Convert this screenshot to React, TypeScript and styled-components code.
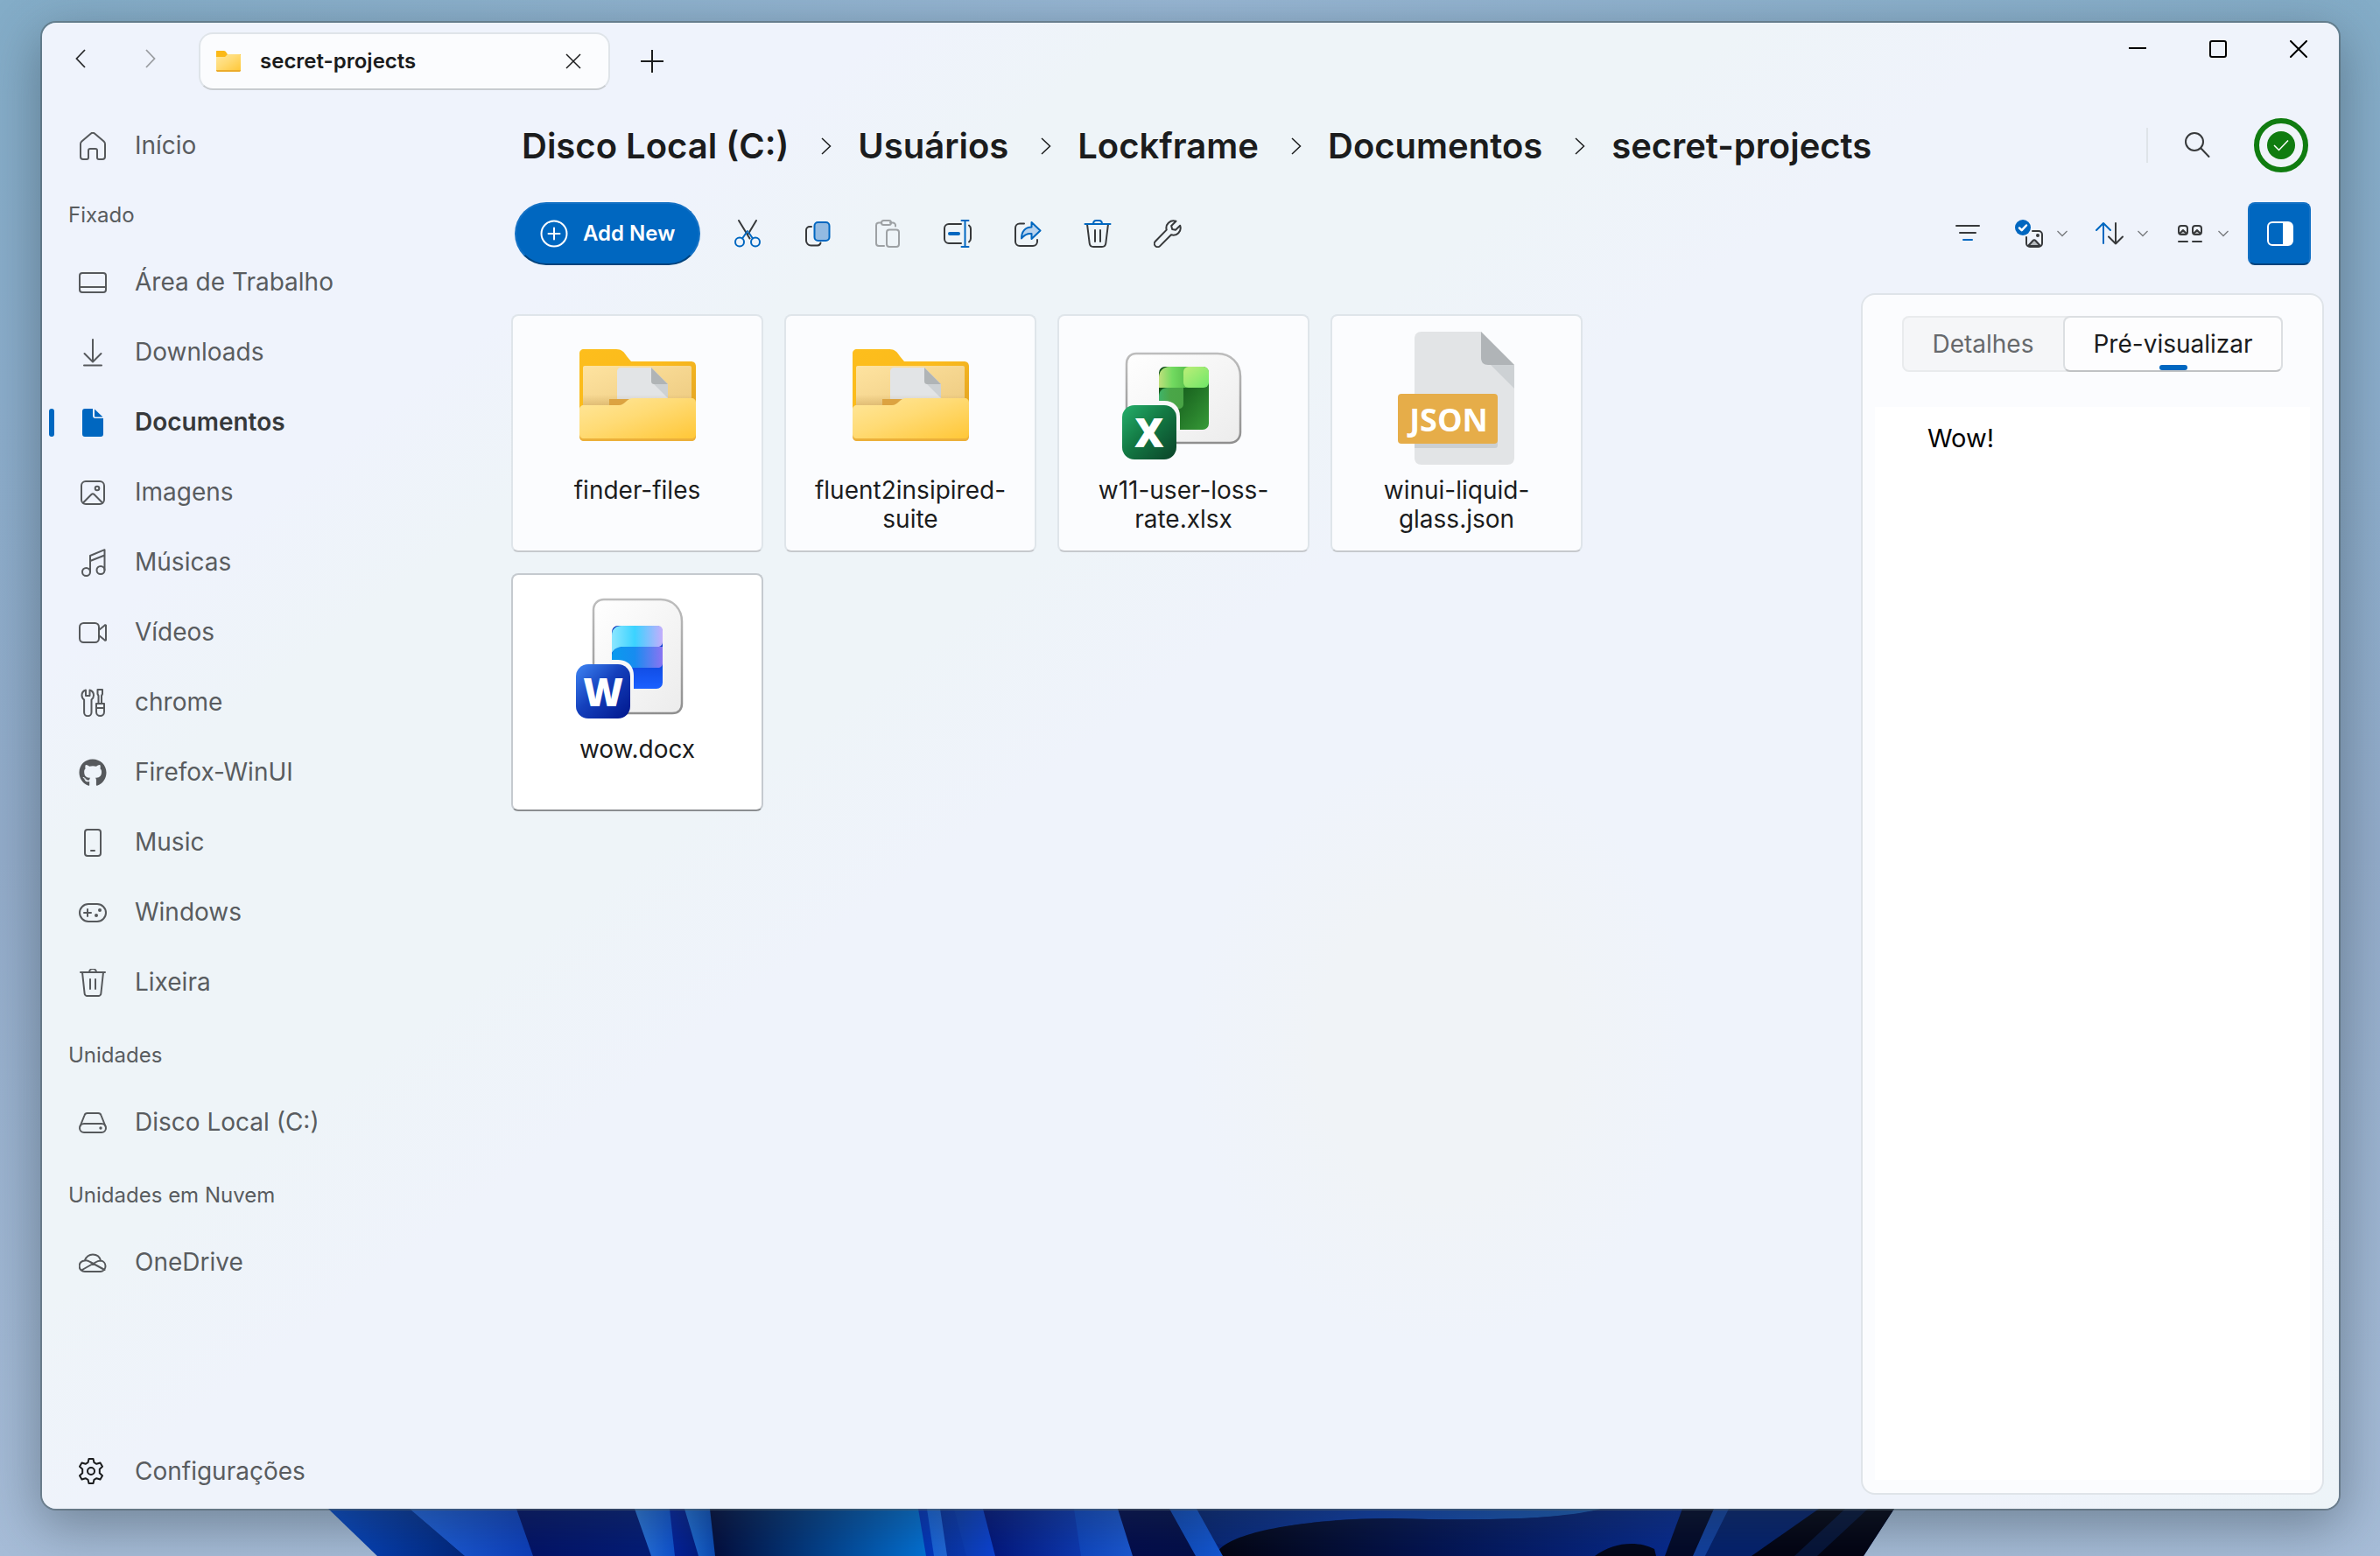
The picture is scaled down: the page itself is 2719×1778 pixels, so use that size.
import React, { useState } from "react";
import styled, { createGlobalStyle, css } from "styled-components";
import { FaGithub } from "react-icons/fa";

const font = `Inter, "Noto Sans", "Liberation Sans", sans-serif`;
const accent = "#0067c0";

const GlobalStyle = createGlobalStyle`
  *, *::before, *::after { box-sizing: border-box; }
  body { margin: 0; font-family: ${font}; color: #1b1c1d; }
  button { font: inherit; color: inherit; background: none; border: 0; padding: 0; cursor: pointer; }
  a { color: inherit; text-decoration: none; }
  svg { display: block; flex: none; }
`;

/* ---------- shell ---------- */

const Desktop = styled.div`
  position: relative;
  display: flex;
  min-height: 100vh;
  padding: 26px 47px 54px 48px;
  overflow: hidden;
  background:
    radial-gradient(ellipse 50% 12% at 50% 0, rgba(158, 186, 216, 0.8), transparent),
    linear-gradient(180deg, #84adc8 0%, #8badcb 25%, #93acca 55%, #a7bdd8 100%);
`;

const Bloom = styled.svg`
  position: absolute;
  left: 0;
  bottom: 0;
  width: 100%;
  height: 54px;
`;

const Window = styled.div`
  position: relative;
  flex: 1;
  min-width: 0;
  display: flex;
  flex-direction: column;
  border-radius: 16px;
  background:
    radial-gradient(ellipse 11% 20% at 61% 69%, #f0f3f7 50%, rgba(240, 243, 247, 0) 100%),
    radial-gradient(circle at 100% 100%, #edf4f8 0, rgba(237, 244, 248, 0) 14%),
    linear-gradient(143deg, #eff3fc 0%, #eff3fc 20%, #eef4f8 26%, #eef4f8 40%, #eff3fb 47%, #eff3fb 100%);
  box-shadow:
    0 0 0 2px rgba(80, 96, 104, 0.55),
    0 16px 60px 4px rgba(40, 55, 65, 0.42);
`;

const TitleBar = styled.header`
  display: flex;
  align-items: flex-start;
  height: 99px;
  padding-left: 4px;
`;

const HistoryNav = styled.div`
  display: flex;
  padding-top: 11px;
  margin-right: 15px;
`;

const HistoryButton = styled.button<{ $dim?: boolean }>`
  display: grid;
  place-items: center;
  width: 80px;
  height: 60px;
  color: ${(p) => (p.$dim ? "#9a9da1" : "#2b2c2e")};
`;

const Tab = styled.div`
  display: flex;
  align-items: center;
  width: 470px;
  height: 66px;
  margin-top: 11px;
  padding: 0 16px 0 18px;
  border: 2px solid #dfe4e9;
  border-bottom-color: #c8ccd0;
  border-radius: 16px;
  background: #fbfcfe;
`;

const TabTitle = styled.span`
  flex: 1;
  margin-left: 22px;
  font-size: 24px;
  line-height: 32px;
  font-weight: 600;
`;

const SmallButton = styled.button`
  display: grid;
  place-items: center;
  width: 48px;
  height: 48px;
`;

const NewTab = styled(SmallButton)`
  width: 56px;
  height: 66px;
  margin: 11px 0 0 20px;
`;

const WindowControls = styled.div`
  display: flex;
  margin-left: auto;
  color: #000;
`;

const ControlButton = styled.button`
  display: grid;
  place-items: center;
  width: 92px;
  height: 60px;
`;

const Body = styled.div`
  flex: 1;
  min-height: 0;
  display: flex;
`;

/* ---------- sidebar ---------- */

const Sidebar = styled.nav`
  display: flex;
  flex-direction: column;
  flex: 0 0 536px;
  padding-bottom: 4px;
  color: #595c5f;
`;

const NavList = styled.ul`
  margin: 0;
  padding: 0;
  list-style: none;
`;

const NavHeading = styled.h2<{ $spaced?: boolean }>`
  display: flex;
  align-items: center;
  height: 76px;
  margin: ${(p) => (p.$spaced ? "4px" : "0")} 0 0;
  padding: 6px 0 0 30px;
  font-size: 24px;
  line-height: 32px;
  font-weight: 400;
`;

const NavLink = styled.a<{ $active?: boolean }>`
  display: flex;
  align-items: center;
  height: 80px;
  padding: 2px 0 0 8px;
  font-size: 28px;
  line-height: 36px;
  ${(p) =>
    p.$active &&
    css`
      color: #37393b;
      font-weight: 600;
    `}
  &::before {
    content: "";
    width: 6px;
    height: 32px;
    margin: 2px 28px 0 0;
    border-radius: 3px;
    background: ${(p) => (p.$active ? accent : "transparent")};
  }
`;

const NavIcon = styled.span<{ $active?: boolean }>`
  width: 32px;
  height: 32px;
  margin: 2px 32px 0 0;
  color: ${(p) => (p.$active ? accent : "#56595c")};
`;

const Footer = styled.div`
  margin-top: auto;
  ${NavIcon} {
    margin-top: 0;
    color: #1b1c1d;
  }
`;

/* ---------- main ---------- */

const Main = styled.main`
  flex: 1;
  min-width: 0;
  display: flex;
  flex-direction: column;
  padding: 0 17px 16px 0;
`;

const Heading = styled.div`
  display: flex;
  align-items: center;
  height: 82px;
  padding: 0 18px 0 12px;
`;

const Crumbs = styled.ol`
  display: flex;
  align-items: center;
  margin: 0;
  padding: 2px 0 0;
  list-style: none;
  font-size: 40px;
  line-height: 48px;
  font-weight: 600;
`;

const Crumb = styled.li`
  display: flex;
  align-items: center;
  svg {
    margin: 0 30px 0 37px;
  }
`;

const HeadingActions = styled.div`
  display: flex;
  align-items: center;
  margin-left: auto;
`;

const Divider = styled.span`
  width: 2px;
  height: 40px;
  background: #dfe4e9;
`;

const SearchButton = styled.button`
  display: grid;
  place-items: center;
  width: 72px;
  height: 72px;
  margin: 0 29px 0 20px;
  color: #37393b;
`;

const StatusBadge = styled.button`
  display: grid;
  place-items: center;
  width: 62px;
  height: 62px;
  border: 6px solid #107c10;
  border-radius: 50%;
  background: #eff4f9;
`;

const Toolbar = styled.div`
  display: flex;
  align-items: center;
  gap: 8px;
  margin-top: 24px;
  padding: 0 15px 0 4px;
`;

const AddButton = styled.button`
  display: flex;
  align-items: center;
  gap: 17px;
  height: 72px;
  margin-right: 10px;
  padding: 0 27px;
  border: 2px solid #1471c4;
  border-bottom-color: #00437d;
  border-radius: 36px;
  background: ${accent};
  color: #fff;
  font-size: 24px;
  line-height: 32px;
  font-weight: 600;
`;

const ToolButton = styled.button<{ $push?: boolean }>`
  display: grid;
  place-items: center;
  width: 72px;
  height: 72px;
  margin-left: ${(p) => (p.$push ? "auto" : "0")};
  color: #37393b;
  &:disabled {
    color: #9da1a4;
  }
`;

const MenuButton = styled.button`
  display: flex;
  align-items: center;
  gap: 16px;
  width: 84px;
  height: 72px;
  padding-left: 10px;
  color: #37393b;
`;

const PanelButton = styled(ToolButton)`
  border: 2px solid #1471c4;
  border-bottom-color: #00437d;
  border-radius: 8px;
  background: ${accent};
  color: #fff;
`;

const Content = styled.div`
  flex: 1;
  display: flex;
  min-height: 0;
  margin-top: 32px;
`;

const Files = styled.div`
  flex: 1;
  display: grid;
  grid-template-columns: repeat(auto-fill, 288px);
  grid-auto-rows: 272px;
  gap: 24px;
  padding: 24px 32px 0 0;
`;

const Card = styled.button<{ $selected?: boolean }>`
  display: flex;
  flex-direction: column;
  align-items: center;
  padding: 18px 24px 0;
  border: 2px solid ${(p) => (p.$selected ? "#c5cacf" : "#dfe5ea")};
  border-bottom-color: ${(p) => (p.$selected ? "#8b8e91" : "#c6c9cd")};
  border-radius: 8px;
  background: ${(p) => (p.$selected ? "#fff" : "#fbfcfe")};
  font-size: 28px;
  line-height: 33px;
  text-align: center;
`;

const CardName = styled.span`
  margin-top: 13px;
`;

const Preview = styled.aside`
  display: flex;
  flex-direction: column;
  align-items: center;
  flex: 0 0 529px;
  padding: 24px 14px 15px;
  border: 2px solid #dfe4e9;
  border-radius: 16px;
  background: #fbfcfe;
`;

const Segments = styled.div`
  display: flex;
  height: 64px;
  border-radius: 8px;
  background: #f5f6f8;
  box-shadow: inset 0 0 0 2px #e9ebed;
`;

const Segment = styled.button<{ $active: boolean }>`
  position: relative;
  padding: 0 32px;
  border: 2px solid transparent;
  border-radius: 8px;
  font-size: 28px;
  line-height: 36px;
  color: #66696c;
  ${(p) =>
    p.$active &&
    css`
      color: #1b1c1d;
      background: #fdfdfe;
      border-color: #dcdfe2;
      border-bottom-color: #c0c2c4;
      &::after {
        content: "";
        position: absolute;
        left: calc(50% - 16px);
        bottom: 0;
        width: 32px;
        height: 6px;
        border-radius: 3px;
        background: ${accent};
      }
    `}
`;

const Sheet = styled.article`
  flex: 1;
  align-self: stretch;
  margin-top: 40px;
  padding: 18px 60px;
  background: #fff;
  color: #000;
  font-size: 29px;
  line-height: 36px;
`;

/* ---------- icons ---------- */

type IconProps = { size?: number; w?: number; children: React.ReactNode };
const Icon = ({ size = 32, w = 2, children }: IconProps) => (
  <svg
    width={size}
    height={size}
    viewBox="0 0 32 32"
    fill="none"
    stroke="currentColor"
    strokeWidth={w}
    strokeLinecap="round"
    strokeLinejoin="round"
    aria-hidden="true"
  >
    {children}
  </svg>
);

const Chevron = ({ dir }: { dir: "left" | "right" }) => (
  <svg width="12" height="22" viewBox="0 0 12 22" fill="none" stroke="currentColor" strokeWidth="1.800" aria-hidden="true">
    <path d={dir === "left" ? "M11 1 1.500 11 11 21" : "M1 1 10.500 11 1 21"} />
  </svg>
);

const CrumbChevron = () => (
  <svg width="12" height="20" viewBox="0 0 12 20" fill="none" stroke="#1b1c1d" strokeWidth="1.500" aria-hidden="true">
    <path d="M1 1 10.500 10 1 19" />
  </svg>
);

const Caret = () => (
  <svg width="12" height="8" viewBox="0 0 12 8" fill="none" stroke="#77797c" strokeWidth="1.300" aria-hidden="true">
    <path d="M.5 1 6 6.500 11.500 1" />
  </svg>
);

const icons = {
  home: (
    <Icon>
      <path d="M2 13.600a4 4 0 0 1 1.400-3L14 1.600a3 3 0 0 1 4 0l10.600 9a4 4 0 0 1 1.400 3V28a3 3 0 0 1-3 3h-4a2 2 0 0 1-2-2v-8a2 2 0 0 0-2-2h-6a2 2 0 0 0-2 2v8a2 2 0 0 1-2 2H5a3 3 0 0 1-3-3Z" />
    </Icon>
  ),
  desktop: (
    <Icon>
      <rect x="1" y="5" width="30" height="22" rx="3" />
      <path d="M1 21h30" />
    </Icon>
  ),
  download: (
    <Icon>
      <path d="M16 1v25M6.500 17l9.500 9.500L25.500 17M6 30.500h20" />
    </Icon>
  ),
  document: (
    <Icon>
      <path
        fill="currentColor"
        stroke="none"
        d="M16 0v8a3 3 0 0 0 3 3h9v18a3 3 0 0 1-3 3H7a3 3 0 0 1-3-3V3a3 3 0 0 1 3-3ZM18 .5 27.500 9.500H19a1 1 0 0 1-1-1Z"
      />
    </Icon>
  ),
  image: (
    <Icon>
      <rect x="3" y="3" width="26" height="26" rx="5" />
      <circle cx="21" cy="11" r="2.300" />
      <path d="m5 27.500 9.400-9.500a2.300 2.300 0 0 1 3.200 0l9.400 9.500" />
    </Icon>
  ),
  notes: (
    <Icon>
      <circle cx="8.500" cy="26.500" r="4.500" />
      <circle cx="25" cy="24.500" r="4.500" />
      <path d="M13 26.500V8L29.500 1.200v23M13 14l16.500-6.500" />
    </Icon>
  ),
  video: (
    <Icon>
      <rect x="1" y="5" width="22" height="22" rx="4.500" />
      <path d="m23 13 6.400-5.200a.8.800 0 0 1 1.600.6v15.200a.8.800 0 0 1-1.600.6L23 19" />
    </Icon>
  ),
  tools: (
    <Icon>
      <path d="M8 1.500V8h4.500V1.500c3 1 4.500 3.500 4.500 6 0 2.500-1.200 4-2.500 5V27a4.200 4.200 0 0 1-8.400 0V12.500C4.700 11.500 3.500 10 3.500 7.500c0-2.500 1.500-5 4.500-6ZM21.500 1h5.500v5l-1 2v8.500M22.500 16.500V8l-1-2V1M20 17h9v9.500a4.500 4.500 0 0 1-9 0ZM20 22h9" />
    </Icon>
  ),
  github: <FaGithub size={32} />,
  phone: (
    <Icon>
      <rect x="7" y="1" width="18" height="30" rx="3" />
      <path d="M14 25h4" />
    </Icon>
  ),
  gamepad: (
    <Icon>
      <rect x="1" y="6" width="30" height="20" rx="10" />
      <path d="M10 12v8M6 16h8" />
      <circle cx="24" cy="13" r="2" fill="currentColor" stroke="none" />
      <circle cx="20" cy="19" r="2" fill="currentColor" stroke="none" />
    </Icon>
  ),
  bin: (
    <Icon>
      <path d="M2 4h28M12 4a4 4 0 0 1 8 0M4 4l2.600 24a3 3 0 0 0 3 3h12.800a3 3 0 0 0 3-3L28 4M13 12v11M19 12v11" />
    </Icon>
  ),
  disk: (
    <Icon>
      <path d="M1.500 20 6.500 7.500A3.500 3.500 0 0 1 10 5h12a3.500 3.500 0 0 1 3.500 2.500l5 12.500" />
      <rect x="1" y="17" width="30" height="10" rx="5" />
      <circle cx="25" cy="22" r="1.700" fill="currentColor" stroke="none" />
    </Icon>
  ),
  cloud: (
    <Icon>
      <path d="M7 26a6.300 6.300 0 0 1-.2-12.600C8.500 9 12 6.500 16 6.500c4.600 0 8 2.700 9 7A6.300 6.300 0 0 1 25 26ZM7 13.400c2.500-.4 4.500.6 6 1.600l16.500 9M3 24.500 18 16c2.500-1.500 4.500-2.400 7-2.400" />
    </Icon>
  ),
  gear: (
    <svg width="28" height="32" viewBox="0 0 28 32" fill="none" stroke="currentColor" strokeWidth="2" strokeLinejoin="round" aria-hidden="true">
      <circle cx="14" cy="16" r="4" />
      <path d="M11.500 2h5l1 4.200 2.800 1.600 4.200-1.300 2.500 4.300-3.200 3v4.400l3.200 3-2.500 4.300-4.200-1.300-2.800 1.600-1 4.200h-5l-1-4.200-2.800-1.600-4.200 1.300L1 21.200l3.200-3v-4.400L1 10.800l2.500-4.300 4.200 1.300 2.800-1.600Z" />
    </svg>
  ),
};

const tools = {
  cut: (
    <Icon>
      <path d="m6 1 12.500 20.500M26 1l-9 15" />
      <g stroke={accent}>
        <circle cx="7" cy="25.500" r="5" />
        <circle cx="25" cy="25.500" r="5" />
        <path d="m10 21.500 6-8.500M22 21.500 17.500 15" />
      </g>
    </Icon>
  ),
  copy: (
    <Icon>
      <path d="M9 8H7a4 4 0 0 0-4 4v12a5.500 5.500 0 0 0 5.500 5.500H16a4 4 0 0 0 3.500-3" />
      <rect x="12.500" y="3" width="17" height="21" rx="4" fill="#93bbe2" stroke={accent} />
    </Icon>
  ),
  paste: (
    <Icon>
      <path d="M9 3.500H6a3 3 0 0 0-3 3V27a3 3 0 0 0 3 3h6M19 3.500h3a3 3 0 0 1 3 3v1" />
      <rect x="9" y="1" width="11" height="5" rx="2.500" />
      <rect x="15" y="11.500" width="14" height="19.500" rx="3" />
    </Icon>
  ),
  rename: (
    <Icon>
      <path d="M20 5H6a5 5 0 0 0-5 5v12a5 5 0 0 0 5 5h14M29 6.500A5 5 0 0 1 31 10.500v11a5 5 0 0 1-2 4" />
      <path stroke={accent} d="M24.500 1.500v29M20.500 1h8M20.500 31h8" />
      <path stroke={accent} strokeWidth="4" d="M7 16h10" />
    </Icon>
  ),
  share: (
    <Icon>
      <path d="M12 4.500H7a5 5 0 0 0-5 5V25a5 5 0 0 0 5 5h15a5 5 0 0 0 5-5v-2" />
      <path fill="#b9d3ee" stroke={accent} d="M20.500 3 30.500 12.500l-10 9.500v-6c-5-.5-8.500 1.500-11.500 5.500 0-7.500 4-13 11.500-13Z" />
    </Icon>
  ),
  trash: (
    <Icon>
      <path d="m4 5 2.700 22a4.500 4.500 0 0 0 4.500 4h9.600a4.500 4.500 0 0 0 4.500-4L28 5M13 12v13M19 12v13" />
      <path stroke={accent} d="M1.500 5h29M11 5c0-2.500 1.500-4 3.500-4h3c2 0 3.500 1.500 3.500 4" />
    </Icon>
  ),
  wrench: (
    <Icon>
      <path d="M25.500 1.800a8.200 8.200 0 0 0-10.800 9.800L1.900 24.800a3.700 3.700 0 0 0 5.300 5.300L20 17.300A8.200 8.200 0 0 0 30.200 6.800l-5.200 5-3.800-.8-1-4Z" />
    </Icon>
  ),
  filter: (
    <Icon>
      <path d="M3 7h26M7 15h18" />
      <path stroke={accent} d="M11 23h10" />
    </Icon>
  ),
  select: (
    <Icon>
      <path d="M20 13h7a4 4 0 0 1 4 4v10a4 4 0 0 1-4 4H17a4 4 0 0 1-4-4v-7" />
      <path fill="#b5b9bc" d="m15 30 5.500-6a2 2 0 0 1 3 0l5.500 6Z" />
      <circle cx="26" cy="18" r="2" fill="currentColor" stroke="none" />
      <circle cx="9" cy="9" r="9" fill={accent} stroke="none" />
      <path stroke="#fff" strokeWidth="2.500" d="m5 9.500 2.700 2.700L13 6.500" />
    </Icon>
  ),
  sort: (
    <Icon>
      <path stroke={accent} d="M9 27V4.500M1 12l8-8 8 8" />
      <path d="M23 4v23.500M15 19.500l8 8 8-8" />
    </Icon>
  ),
  view: (
    <Icon>
      {[3, 19].map((x) => (
        <g key={x}>
          <rect x={x} y="7" width="10" height="10" rx="3" />
          <path fill="#b5b9bc" d={`m${x + 1} 16 4-4 4 4`} />
          <path d={`M${x} 25h10`} />
        </g>
      ))}
    </Icon>
  ),
  panel: (
    <Icon>
      <rect x="3" y="3" width="28" height="26" rx="5" />
      <path fill="currentColor" stroke="none" d="M20 3h6a5 5 0 0 1 5 5v16a5 5 0 0 1-5 5h-6Z" />
    </Icon>
  ),
};

/* ---------- file artwork ---------- */

const Art = ({ children }: { children: React.ReactNode }) => (
  <svg width="160" height="152" viewBox="0 0 160 152" aria-hidden="true">
    {children}
  </svg>
);

const FolderArt = () => (
  <Art>
    <path fill="url(#folderBack)" d="M19 20h37c6 0 9 3 12 8l5 6h68c4 0 6 2 6 6v56H14V25c0-3 2-5 5-5Z" />
    <rect x="18" y="39" width="124" height="50" rx="2" fill="url(#folderInner)" />
    <path fill="#e2e4e6" d="M61 41h35l19 19v20H57V45c0-2 2-4 4-4Z" />
    <path fill="#cdd1d4" d="m99 60 16 16V60Z" />
    <path fill="#b0b4b6" d="M96 41v15c0 3 1 4 4 4h15Z" />
    <path fill="url(#folderShade)" d="M18 72h124v14H18Z" />
    <path fill="#dca341" d="M48 77h25v10H48Z" />
    <path fill="#ecb03a" d="M14 90h133v30c0 3-2 5-5 5H19c-3 0-5-2-5-5Z" />
    <path fill="url(#folderFront)" d="M19 84h40c7 0 9-8 16-8h67c3 0 5 2 5 5v36c0 3-2 5-5 5H19c-3 0-5-2-5-5V89c0-3 2-5 5-5Z" />
  </Art>
);

const ExcelArt = () => (
  <Art>
    <path fill="url(#page)" stroke="url(#pageEdge)" strokeWidth="2.500" d="M26 25h93c15 0 26 11 26 26v64c0 7-5 12-12 12H27c-7 0-12-5-12-12V37c0-7 4-12 11-12Z" />
    <rect x="52" y="40" width="57" height="72" rx="7" fill="url(#xlDark)" />
    <path fill="url(#xlLeft)" d="M64 40h22v24H52V52c0-7 5-12 12-12Z" />
    <rect x="80" y="40" width="29" height="24" rx="6" fill="url(#xlRight)" />
    <path fill="url(#xlMid)" d="M62 64h18v18c0 4-2 6-6 6H52V74c0-6 4-10 10-10Z" />
    <path fill="#f8f8f8" d="M48 79h10c11 0 18 7 18 18v16H48Z" />
    <rect x="10" y="84" width="62" height="62" rx="14" fill="url(#xlBadge)" />
    <text x="41" y="132" textAnchor="middle" fill="#fff" fontFamily='"Open Sans", sans-serif' fontWeight="800" fontSize="46">X</text>
  </Art>
);

const JsonArt = () => (
  <Art>
    <path fill="#e2e4e6" d="M40 0h68l38 38v106c0 5-3 8-8 8H40c-5 0-8-3-8-8V8c0-5 3-8 8-8Z" />
    <path fill="#cdd1d4" d="m119 38 27 27V38Z" />
    <path fill="#b0b4b7" d="M108 0v30c0 5 3 8 8 8h30Z" />
    <path fill="#cbcfd2" d="M32 124h95v6c0 2-1 3-3 3H32Z" />
    <rect x="13" y="71" width="114" height="57" rx="4" fill="#e6ad49" />
    <text x="71" y="114" textAnchor="middle" fill="#fff" fontFamily='"Open Sans", sans-serif' fontWeight="700" fontSize="36">JSON</text>
  </Art>
);

const WordArt = () => (
  <Art>
    <path fill="url(#page)" stroke="url(#pageEdge)" strokeWidth="2.500" d="M42 10h65c14 0 24 11 24 25v94c0 7-4 11-11 11H41c-6 0-11-4-11-11V22c0-7 5-12 12-12Z" />
    <rect x="51" y="40" width="58" height="72" rx="7" fill="url(#wdLow)" />
    <path fill="url(#wdMid)" d="M63 64h46v18c0 4-2 6-6 6H51V74c0-6 6-10 12-10Z" />
    <path fill="url(#wdTop)" d="M62 40h41c4 0 6 2 6 6v12c0 4-2 6-6 6H64c-6 0-10 2-13 7V51c0-7 4-11 11-11Z" />
    <path fill="#f7f7f8" d="M48 79h10c11 0 18 7 18 18v16H48Z" />
    <rect x="10" y="84" width="62" height="62" rx="14" fill="url(#wdBadge)" />
    <text x="41" y="132" textAnchor="middle" fill="#fff" fontFamily='"Open Sans", sans-serif' fontWeight="800" fontSize="44">W</text>
  </Art>
);

type GradProps = { id: string; from: string; to: string; mid?: string; dir?: "x" | "y" | "d" };
const Grad = ({ id, from, to, mid, dir = "d" }: GradProps) => (
  <linearGradient id={id} x1="0" y1="0" x2={dir === "y" ? 0 : 1} y2={dir === "x" ? 0 : 1}>
    <stop offset="0" stopColor={from} />
    {mid && <stop offset=".45" stopColor={mid} />}
    <stop offset="1" stopColor={to} />
  </linearGradient>
);

/* Each petal is a strip: top-left x, top-right x, bottom-left x, bottom-right x, colours. */
const petals: [number, number, number, number, string, string][] = [
  [375, 468, 431, 531, "#0547c4", "#00257c"],
  [468, 590, 531, 609, "#1e62dc", "#0b3dbc"],
  [590, 725, 609, 744, "#001066", "#001a78"],
  [725, 765, 744, 771, "#2b78dc", "#0b4fd0"],
  [765, 782, 771, 798, "#0020a0", "#001a80"],
  [782, 811, 798, 817, "#2070d8", "#0848b4"],
  [811, 1049, 817, 1058, "#000a3a", "#0072d8"],
  [1049, 1059, 1058, 1067, "#0030b8", "#0038c0"],
  [1059, 1074, 1067, 1082, "#1462dc", "#2068d8"],
  [1074, 1090, 1082, 1104, "#0530a0", "#0838b4"],
  [1090, 1123, 1104, 1137, "#0a3aac", "#0a42d8"],
  [1123, 1227, 1137, 1235, "#00127a", "#0b38b4"],
  [1227, 1277, 1235, 1294, "#0c44c0", "#1a58d4"],
  [1277, 1336, 1294, 1366, "#000a4c", "#000c48"],
  [1336, 1366, 1366, 1396, "#0d48b8", "#1258d8"],
];

const Wallpaper = () => (
  <Bloom viewBox="0 0 2719 54" preserveAspectRatio="none" aria-hidden="true">
    <defs>
      {petals.map((p, i) => (
        <Grad key={i} id={`petal${i}`} from={p[4]} to={p[5]} dir="x" />
      ))}
      <Grad id="wave" from="#000a40" mid="#03217c" to="#052a94" />
      <Grad id="crest" from="#04206c" mid="#0b3aa8" to="#1a5cb4" dir="x" />
      <Grad id="hollow" from="#000210" mid="#011150" to="#052a94" dir="x" />
    </defs>
    <path fill="url(#wave)" d="M1345 0H2164L2129 54H1380Z" />
    <path fill="url(#crest)" d="M1345 0H1830C1790 12 1700 14 1590 11 1500 11 1440 22 1398 42L1360 30Z" />
    <path fill="url(#hollow)" d="M1390 54c0-20 70-42 200-43 110 3 190 1 240-11h100l-20 54Z" />
    <path fill="#000417" d="M1822 54c20-16 50-18 68-8l2 8Z" />
    <path fill="#000727" d="M1922 0h38l-22 54h-36Z" />
    <path fill="#103f9e" d="M1958 0h18l-28 54h-14Z" />
    <path fill="#03206c" d="M1975 0h103l-76 54h-54Z" />
    <path fill="#000211" d="M2078 0h86l-35 54h-128Z" />
    <path fill="#041237" d="M2108 0h26l-58 54h-26Z" />
    {petals.map((p, i) => (
      <path key={i} fill={`url(#petal${i})`} d={`M${p[0]} 0H${p[1] + 1}L${p[3] + 1} 54H${p[2]}Z`} />
    ))}
  </Bloom>
);

const HiddenSvg = styled.svg`
  position: absolute;
`;

const ArtDefs = () => (
  <HiddenSvg width="0" height="0" aria-hidden="true">
    <defs>
      <Grad id="folderBack" from="#fdbe1c" mid="#fbbb1c" to="#e0a226" />
      <Grad id="folderInner" from="#fee3a0" to="#edca80" />
      <Grad id="folderShade" from="rgba(160,110,30,0)" to="rgba(160,110,30,.28)" dir="y" />
      <Grad id="folderFront" from="#ffe79c" mid="#ffdb75" to="#ffc737" />
      <Grad id="page" from="#ffffff" to="#ececec" />
      <Grad id="pageEdge" from="#bdbdbd" to="#8f8f8f" dir="y" />
      <Grad id="xlDark" from="#0a4a14" mid="#1a6620" to="#379a38" />
      <Grad id="xlLeft" from="#bfe07c" mid="#72da60" to="#56bc4a" dir="x" />
      <Grad id="xlRight" from="#bdee78" to="#6fe768" />
      <Grad id="xlMid" from="#3fb36a" mid="#4aa648" to="#49a445" dir="x" />
      <Grad id="xlBadge" from="#25b06b" mid="#137a44" to="#0b4228" />
      <Grad id="wdLow" from="#0028b4" to="#1a60ff" dir="y" />
      <Grad id="wdMid" from="#0a9bee" mid="#178cf0" to="#8a74f2" dir="x" />
      <Grad id="wdTop" from="#8ce6ff" mid="#3bd3ff" to="#c4adfc" dir="x" />
      <Grad id="wdBadge" from="#3f86f4" mid="#1440bc" to="#00168c" />
    </defs>
  </HiddenSvg>
);

const TabFolder = () => (
  <svg width="28" height="24" viewBox="0 0 28 24" aria-hidden="true">
    <path fill="#fbb917" d="M1 0h8c2 0 3 3 4 4h15v6H0V1c0-1 0-1 1-1Z" />
    <path fill="url(#folderFront)" d="M0 7h10l3-3h14l1 1v18H0Z" />
    <path fill="#ecac2b" d="M0 22h28v1l-1 1H1l-1-1Z" />
  </svg>
);

/* ---------- data ---------- */

type NavItem = { label: string; icon: keyof typeof icons };

const pinned: NavItem[] = [
  { label: "Área de Trabalho", icon: "desktop" },
  { label: "Downloads", icon: "download" },
  { label: "Documentos", icon: "document" },
  { label: "Imagens", icon: "image" },
  { label: "Músicas", icon: "notes" },
  { label: "Vídeos", icon: "video" },
  { label: "chrome", icon: "tools" },
  { label: "Firefox-WinUI", icon: "github" },
  { label: "Music", icon: "phone" },
  { label: "Windows", icon: "gamepad" },
  { label: "Lixeira", icon: "bin" },
];

const groups: { title?: string; items: NavItem[] }[] = [
  { items: [{ label: "Início", icon: "home" }] },
  { title: "Fixado", items: pinned },
  { title: "Unidades", items: [{ label: "Disco Local (C:)", icon: "disk" }] },
  { title: "Unidades em Nuvem", items: [{ label: "OneDrive", icon: "cloud" }] },
];

const crumbs = ["Disco Local (C:)", "Usuários", "Lockframe", "Documentos", "secret-projects"];

const commands: { label: string; icon: keyof typeof tools; disabled?: boolean }[] = [
  { label: "Recortar", icon: "cut" },
  { label: "Copiar", icon: "copy" },
  { label: "Colar", icon: "paste", disabled: true },
  { label: "Renomear", icon: "rename" },
  { label: "Compartilhar", icon: "share" },
  { label: "Excluir", icon: "trash" },
  { label: "Propriedades", icon: "wrench" },
];

const menus: { label: string; icon: keyof typeof tools }[] = [
  { label: "Selecionar", icon: "select" },
  { label: "Classificar", icon: "sort" },
  { label: "Exibir", icon: "view" },
];

const files = [
  { name: "finder-files", Art: FolderArt },
  { name: "fluent2insipired-suite", Art: FolderArt },
  { name: "w11-user-loss-rate.xlsx", Art: ExcelArt },
  { name: "winui-liquid-glass.json", Art: JsonArt },
  { name: "wow.docx", Art: WordArt },
];

/* ---------- app ---------- */

const NavEntry = ({ item, active }: { item: NavItem; active?: boolean }) => (
  <NavLink href="#" $active={active} aria-current={active ? "page" : undefined}>
    <NavIcon $active={active}>{icons[item.icon]}</NavIcon>
    {item.label}
  </NavLink>
);

export default function App() {
  const [selected, setSelected] = useState("wow.docx");
  const [pane, setPane] = useState("Pré-visualizar");

  return (
    <Desktop>
      <GlobalStyle />
      <ArtDefs />
      <Wallpaper />
      <Window>
        <TitleBar>
          <HistoryNav>
            <HistoryButton aria-label="Voltar">
              <Chevron dir="left" />
            </HistoryButton>
            <HistoryButton $dim aria-label="Avançar">
              <Chevron dir="right" />
            </HistoryButton>
          </HistoryNav>
          <Tab>
            <TabFolder />
            <TabTitle>secret-projects</TabTitle>
            <SmallButton aria-label="Fechar guia">
              <svg width="18" height="18" viewBox="0 0 18 18" stroke="#1b1c1d" strokeWidth="1.500" aria-hidden="true">
                <path d="m1 1 16 16M17 1 1 17" />
              </svg>
            </SmallButton>
          </Tab>
          <NewTab aria-label="Nova guia">
            <svg width="26" height="26" viewBox="0 0 26 26" stroke="#1b1c1d" strokeWidth="2" aria-hidden="true">
              <path d="M13 0v26M0 13h26" />
            </svg>
          </NewTab>
          <WindowControls>
            <ControlButton aria-label="Minimizar">
              <svg width="20" height="20" viewBox="0 0 20 20" stroke="currentColor" strokeWidth="2" aria-hidden="true">
                <path d="M0 9h20" />
              </svg>
            </ControlButton>
            <ControlButton aria-label="Maximizar">
              <svg width="20" height="20" viewBox="0 0 20 20" fill="none" stroke="currentColor" strokeWidth="2" aria-hidden="true">
                <rect x="1" y="1" width="18" height="18" rx="2" />
              </svg>
            </ControlButton>
            <ControlButton aria-label="Fechar">
              <svg width="20" height="20" viewBox="0 0 20 20" stroke="currentColor" strokeWidth="2" strokeLinecap="round" aria-hidden="true">
                <path d="m1 1 18 18M19 1 1 19" />
              </svg>
            </ControlButton>
          </WindowControls>
        </TitleBar>

        <Body>
          <Sidebar aria-label="Locais">
            {groups.map((group, i) => (
              <React.Fragment key={group.title ?? "top"}>
                {group.title && <NavHeading $spaced={i > 1}>{group.title}</NavHeading>}
                <NavList>
                  {group.items.map((item) => (
                    <li key={item.label}>
                      <NavEntry item={item} active={item.label === "Documentos"} />
                    </li>
                  ))}
                </NavList>
              </React.Fragment>
            ))}
            <Footer>
              <NavEntry item={{ label: "Configurações", icon: "gear" }} />
            </Footer>
          </Sidebar>

          <Main>
            <Heading>
              <nav aria-label="Caminho">
                <Crumbs>
                  {crumbs.map((crumb, i) => (
                    <Crumb key={crumb}>
                      {i > 0 && <CrumbChevron />}
                      <a href="#">{crumb}</a>
                    </Crumb>
                  ))}
                </Crumbs>
              </nav>
              <HeadingActions>
                <Divider />
                <SearchButton aria-label="Pesquisar">
                  <Icon>
                    <circle cx="13" cy="12" r="10" />
                    <path d="m20.500 19.500 9 9.500" />
                  </Icon>
                </SearchButton>
                <StatusBadge aria-label="Sincronizado">
                  <svg width="32" height="32" viewBox="0 0 32 32" fill="none" aria-hidden="true">
                    <circle cx="16" cy="16" r="16" fill="#107c10" />
                    <path d="m8 16 5.500 5.500L24 10.500" stroke="#fff" strokeWidth="1.500" />
                  </svg>
                </StatusBadge>
              </HeadingActions>
            </Heading>

            <Toolbar>
              <AddButton>
                <Icon>
                  <circle cx="16" cy="16" r="14.500" />
                  <path d="M16 9.500v13M9.500 16h13" />
                </Icon>
                Add New
              </AddButton>
              {commands.map((c) => (
                <ToolButton key={c.label} aria-label={c.label} disabled={c.disabled}>
                  {tools[c.icon]}
                </ToolButton>
              ))}
              <ToolButton $push aria-label="Filtrar">
                {tools.filter}
              </ToolButton>
              {menus.map((m) => (
                <MenuButton key={m.label} aria-label={m.label} aria-haspopup="menu">
                  {tools[m.icon]}
                  <Caret />
                </MenuButton>
              ))}
              <PanelButton aria-label="Painel de detalhes" aria-pressed="true">
                {tools.panel}
              </PanelButton>
            </Toolbar>

            <Content>
              <Files>
                {files.map(({ name, Art: FileArt }) => (
                  <Card key={name} $selected={name === selected} onClick={() => setSelected(name)}>
                    <FileArt />
                    <CardName>{name}</CardName>
                  </Card>
                ))}
              </Files>
              <Preview>
                <Segments role="tablist">
                  {["Detalhes", "Pré-visualizar"].map((name) => (
                    <Segment key={name} role="tab" aria-selected={pane === name} $active={pane === name} onClick={() => setPane(name)}>
                      {name}
                    </Segment>
                  ))}
                </Segments>
                <Sheet>Wow!</Sheet>
              </Preview>
            </Content>
          </Main>
        </Body>
      </Window>
    </Desktop>
  );
}
